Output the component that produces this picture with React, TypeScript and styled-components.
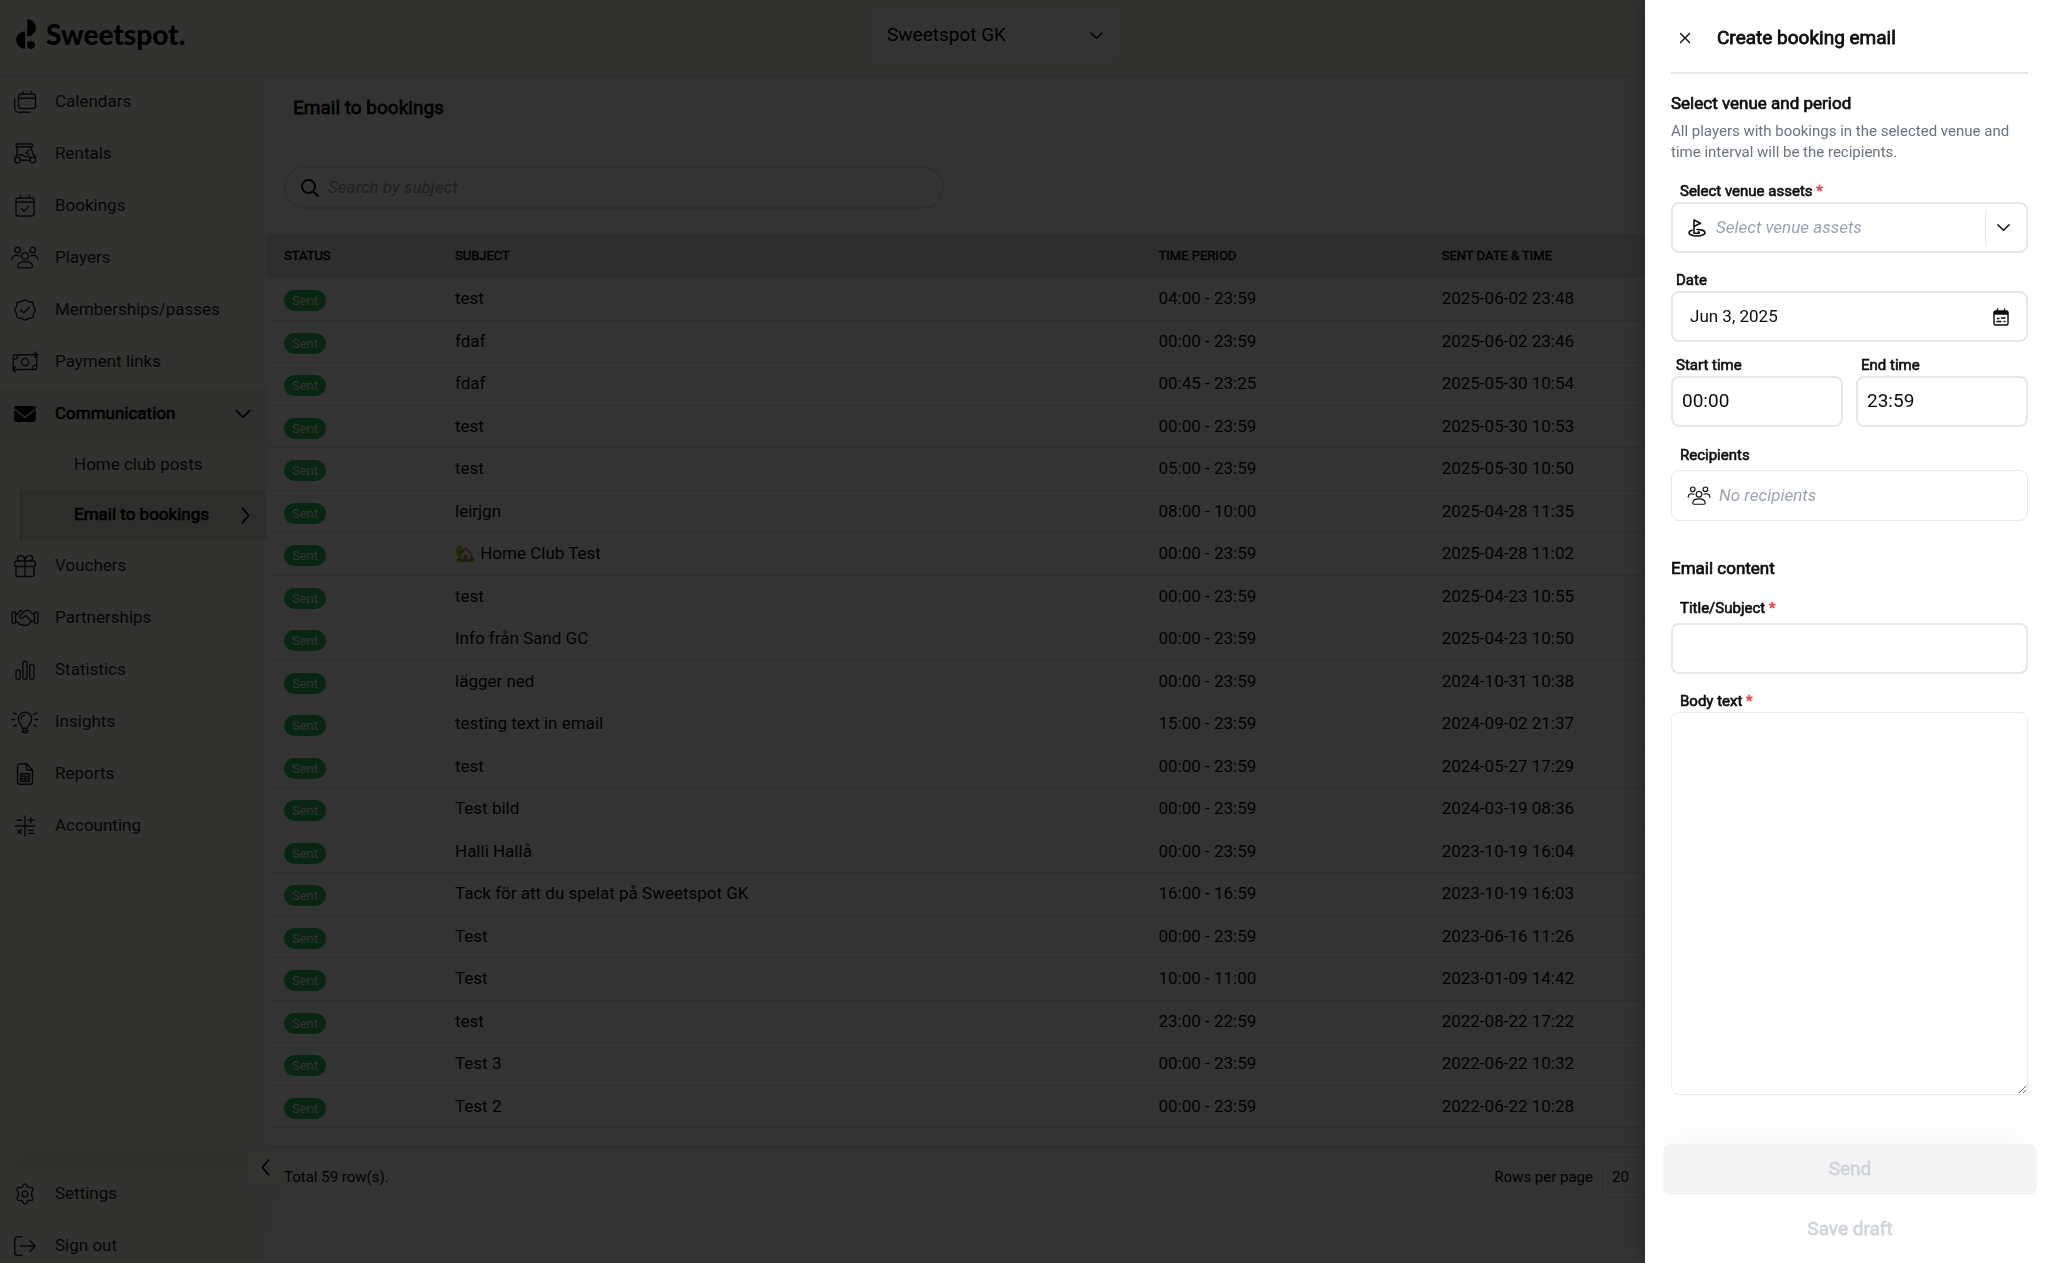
import React, { useState } from 'react';
import styled, { createGlobalStyle, css } from 'styled-components';

const GlobalStyle = createGlobalStyle`
  *, *::before, *::after { box-sizing: border-box; }
  body {
    margin: 0;
    font-family: Roboto, "Liberation Sans", sans-serif;
    font-size: 17px;
    line-height: 1.5;
    color: #0c0c0c;
    background: #fff;
  }
  button, input, select, textarea { font: inherit; color: inherit; margin: 0; }
  button { border: 0; padding: 0; background: none; cursor: pointer; }
  a { color: inherit; text-decoration: none; }
  h1, h2, h3, p, ul { margin: 0; padding: 0; }
  ul { list-style: none; }
`;

const strong = css`
  font-weight: 400;
  -webkit-text-stroke: 0.04em currentColor;
`;

/* ---------- icons ---------- */

const Glyph = styled.svg<{ $weight?: number }>`
  display: block;
  flex: none;
  fill: none;
  stroke: currentColor;
  stroke-width: ${(p) => p.$weight ?? 1.4};
  stroke-linecap: round;
  stroke-linejoin: round;
`;

const NavGlyph = ({ children }: { children: React.ReactNode }) => (
  <Glyph width="28" height="24" viewBox="0 0 28 24" aria-hidden="true">{children}</Glyph>
);

const PeoplePaths = () => (
  <>
    <circle cx="6.5" cy="4" r="2.8" />
    <circle cx="21.7" cy="4" r="2.8" />
    <circle cx="14" cy="10" r="3.4" />
    <path d="M1 13.6c0-2.7 2.2-4.3 4.5-4.3 1 0 1.8.2 2.5.6M27 13.6c0-2.7-2.2-4.3-4.5-4.3-1 0-1.800.2-2.500.6" />
    <path d="M6.6 20.5c0-3 3-5 7.400-5s7.400 2 7.400 5c0 .9-.5 1.400-1.400 1.400H8c-.9 0-1.400-.5-1.400-1.400z" />
  </>
);

const glyphs = {
  calendars: (
    <>
      <rect x="7.5" y="4" width="17" height="14.5" rx="2.5" />
      <path d="M7.5 8.3h17M12 1.5V4M20.2 1.5V4M3.7 9v9.2a4 4 0 0 0 4 4H19" />
    </>
  ),
  cart: (
    <>
      <rect x="5" y="2" width="17" height="2.8" rx="1.2" />
      <path d="M6 4.800V12M19.500 4.800l3 8M18.500 7.500l-3.500 3.500 3.200 2M4.500 15c.5-2 3-2.700 5.500-2.200 2.500.6 3 2.200 8 2.200h1M9.500 18.300h9" />
      <circle cx="6.500" cy="18" r="2.900" />
      <circle cx="21.800" cy="18" r="2.900" />
      <path d="M22 12.500c1.600.4 2.500 1.500 2.500 3" />
    </>
  ),
  booking: (
    <>
      <rect x="5" y="4" width="18" height="18" rx="2.500" />
      <path d="M5 8h18M9.500 1.500V4M18.500 1.500V4M10.500 14.500l2.500 2.700 5-5" />
    </>
  ),
  people: <PeoplePaths />,
  badge: (
    <>
      <path d="M14 2c1.700 0 2.300 1.200 3.700 1.600 1.400.4 2.700-.1 3.800 1s.600 2.400 1 3.800S24.300 10.300 24.300 12s-1.400 2.200-1.800 3.600.1 2.700-1 3.800-2.400.6-3.800 1S15.700 22 14 22s-2.300-1.200-3.700-1.600-2.700.1-3.800-1-.6-2.400-1-3.800S3.700 13.700 3.700 12s1.400-2.200 1.800-3.600-.1-2.700 1-3.800 2.400-.6 3.800-1S12.300 2 14 2z" />
      <path d="M9.800 12l3 3 5.500-5.500" />
    </>
  ),
  payment: (
    <>
      <path d="M2.300 18V6.500A1.700 1.700 0 0 1 4 4.800h22M23.500 2l2.900 2.800-2.900 2.800M25.700 6.800v11a1.700 1.700 0 0 1-1.700 1.700H2M4.500 16.700l-2.900 2.800 2.900 2.800" />
      <circle cx="14" cy="12" r="3.600" />
      <path d="M2.500 9.500c2.700 0 4.300-1.700 4.300-4.500M25.500 15c-2.700 0-4.300 1.700-4.300 4.500" />
    </>
  ),
  mail: (
    <g stroke="none" fill="currentColor">
      <path d="M5.500 4h17A2.300 2.300 0 0 1 24.800 6.200L14 14.500 3.200 6.200A2.300 2.300 0 0 1 5.500 4z" />
      <path d="M3.200 7.800L14 16.200 24.800 7.800v10a2.300 2.300 0 0 1-2.300 2.300h-17a2.300 2.300 0 0 1-2.300-2.300z" />
    </g>
  ),
  gift: (
    <>
      <rect x="3.700" y="7" width="20.600" height="5.500" rx="1.600" />
      <path d="M5 12.500v8a2 2 0 0 0 2 2h14a2 2 0 0 0 2-2v-8M14 7v15.500" />
      <path d="M14 7C14 3.500 12 1.500 9.500 1.500 7.500 1.500 6.500 3 6.500 4.300 6.500 6 8 7 9 7M14 7c0-3.500 2-5.500 4.500-5.500 2 0 3 1.500 3 2.800C21.500 6 20 7 19 7" />
    </>
  ),
  handshake: (
    <>
      <rect x="1" y="6" width="3.600" height="11.500" rx="1.400" />
      <rect x="23.400" y="6" width="3.600" height="11.500" rx="1.400" />
      <path d="M4.600 8.500c1.700 0 2.200-.5 3.200-1.700M4.600 15.300c2.400 0 2.700 1.600 4.400 3.200 1.200 1.100 2.400 0 2.400 0s1.200 1.500 2.700.6c1 .8 2.400.2 2.800-.9 1.300.2 2.300-.8 2.100-2 .8-.9 2-1 4.400-.9" />
      <path d="M23.400 8.500c-2.400 0-2.600-2.200-4.600-3.500-2-1.200-4.600-.6-6 .8l-3.500 3.600c-.8.9-.6 2.100.2 2.700.9.6 2 .3 2.700-.3l2.700-2.300 5.300 5.600M8.600 5.300c.7-.6 1.400-.8 2.200-.8" />
    </>
  ),
  chart: (
    <>
      <rect x="5" y="12" width="4.200" height="9.300" rx="1.600" />
      <rect x="11.900" y="3.300" width="4.200" height="18" rx="1.600" />
      <rect x="18.800" y="6.500" width="4.200" height="14.800" rx="1.600" />
    </>
  ),
  bulb: (
    <>
      <path d="M11.500 18.300c0-3-4.200-4.500-4.200-9.300a6.700 6.700 0 0 1 13.400 0c0 4.800-4.200 6.300-4.200 9.300z" />
      <path d="M11.200 20.500h5.600c0 1.500-1.200 2.400-2.800 2.400s-2.800-.9-2.800-2.400zM10.200 9c0-2 1.400-3.700 3.500-3.900" />
      <path d="M1.200 9.500h2.600M24.200 9.500h2.600M2.500 2.800l2.700 1.500M25.500 2.800l-2.700 1.500M2.500 16.500l2.700-1.700M25.500 16.500l-2.700-1.700" />
    </>
  ),
  report: (
    <>
      <path d="M15.500 1.800H9a2.500 2.500 0 0 0-2.500 2.500v15.400A2.500 2.500 0 0 0 9 22.200h10a2.500 2.500 0 0 0 2.500-2.500V8z" />
      <path d="M15.500 1.800V6.500A1.500 1.500 0 0 0 17 8h4.500" />
      <path d="M9.600 11.800h8.800v7.400H9.600zM9.600 14.300h8.800M9.600 16.800h8.800M14 14.300v4.900" />
    </>
  ),
  calc: (
    <>
      <path d="M4 12h20M14 2v20" />
      <path d="M6 6.300h4.600M17.300 6.300h5.200M19.900 3.700v5.200M6.300 15.800l4 4M10.300 15.800l-4 4M17.300 16.400h5.200M17.300 19.400h5.200" />
    </>
  ),
  gear: (
    <>
      <circle cx="14" cy="12" r="2.900" />
      <path d="M12.100 3.500c.5-2.100 3.300-2.100 3.800 0 .4 1.700 2 2.500 3.600 2 2-.6 3.500 1.700 2 3.300-1.300 1.300-1.300 5.100 0 6.400 1.500 1.600 0 3.900-2 3.300-1.600-.5-3.200.3-3.600 2-.5 2.100-3.300 2.100-3.800 0-.4-1.700-2-2.500-3.600-2-2 .6-3.500-1.700-2-3.300 1.300-1.300 1.300-5.100 0-6.400-1.500-1.600 0-3.900 2-3.300 1.600.5 3.200-.3 3.600-2z" />
    </>
  ),
  signout: <path d="M11 2.700H6.300a2.500 2.500 0 0 0-2.500 2.500v13.600a2.500 2.500 0 0 0 2.500 2.500H11M9.500 12h14.800M18.800 6.500l5.500 5.500-5.500 5.500" />,
};

type GlyphName = keyof typeof glyphs;

const Chevron = ({ dir, size }: { dir: 'down' | 'left' | 'right'; size: number }) => {
  const d = { down: 'M2 5l6 6 6-6', left: 'M11 1L5 8l6 7', right: 'M5 1l6 7-6 7' }[dir];
  return (
    <Glyph $weight={1.6} width={size} height={size} viewBox="0 0 16 16" aria-hidden="true">
      <path d={d} />
    </Glyph>
  );
};

/* ---------- page frame ---------- */

const Page = styled.div`
  display: flex;
  flex-direction: column;
  height: 100vh;
  overflow: hidden;
`;

const TopBar = styled.header`
  display: grid;
  grid-template-columns: 1fr 250px 1fr;
  align-items: start;
  flex: none;
  height: 76px;
  padding: 10px 74px 0 16px;
  background: #fafaf5;
  border-bottom: 1px solid #dfe1e8;
`;

const Brand = styled.a`
  display: flex;
  align-items: center;
  gap: 10px;
  height: 48px;
  font: 900 28px/1 Lato, "Open Sans", sans-serif;
  color: #000;
`;

const BrandMark = styled.svg`
  display: block;
  fill: currentColor;
`;

const selectReset = css`
  appearance: none;
  background: transparent;
  border: 0;
  outline: 0;
  width: 100%;
  height: 100%;
`;

const VenueSwitch = styled.div`
  display: flex;
  align-items: center;
  height: 51px;
  padding: 0 15px 0 16px;
  background: #fff;
  border: 1px solid #f2f2ee;
  border-radius: 8px;
`;

const VenueSelect = styled.select`
  ${selectReset}
  font-size: 19px;
  color: #000;
`;

const Frame = styled.div`
  display: flex;
  flex: 1;
  min-height: 0;
`;

/* ---------- sidebar ---------- */

const Sidebar = styled.nav`
  position: relative;
  display: flex;
  flex-direction: column;
  flex: none;
  width: 267px;
  background: #fafaf5;
  color: #262626;
`;

const NavList = styled.ul`
  flex: 1;
  min-height: 0;
`;

const NavLink = styled.a<{ $open?: boolean }>`
  display: flex;
  align-items: center;
  gap: 16px;
  height: 52px;
  padding: 0 15px 0 11px;
  span { flex: 1; }
  ${(p) => p.$open && css`
    background: #f0f0ea;
    color: #000;
    span { ${strong} }
  `}
`;

const SubList = styled.ul`
  padding-left: 20px;
`;

const SubLink = styled.a<{ $active?: boolean }>`
  display: flex;
  align-items: center;
  justify-content: space-between;
  height: 50px;
  padding: 0 13px 0 53px;
  border-left: 1px solid #e6e6e0;
  background: #f6f6f0;
  ${(p) => p.$active && css`
    background: #e2e2dc;
    border-left-color: #aaa;
    color: #000;
    span { ${strong} }
  `}
`;

const NavFooter = styled.ul`
  flex: none;
  height: 95px;
  box-shadow: 0 -20px 40px -10px rgba(60, 40, 20, 0.12);
`;

const CollapseButton = styled.button`
  position: absolute;
  right: -16px;
  bottom: 78px;
  display: grid;
  place-items: center;
  width: 36px;
  height: 35px;
  border: 1px solid #f0f0ec;
  border-radius: 8px;
  background: #fcfcfa;
  color: #000;
`;

/* ---------- main ---------- */

const Main = styled.main`
  display: flex;
  flex-direction: column;
  flex: 1;
  min-width: 0;
`;

const TitleBar = styled.div`
  display: flex;
  align-items: center;
  height: 66px;
  padding: 0 26px;
  border-bottom: 1px solid #f0f0f0;
`;

const PageTitle = styled.h1`
  ${strong}
  font-size: 19px;
`;

const Toolbar = styled.div`
  padding: 24px 17px 25px;
`;

const SearchBox = styled.label`
  display: flex;
  align-items: center;
  gap: 8px;
  max-width: 660px;
  height: 43px;
  padding: 0 14px;
  border: 2px solid #e6e6ea;
  border-radius: 22px;
`;

const SearchInput = styled.input`
  flex: 1;
  min-width: 0;
  border: 0;
  outline: 0;
  padding: 0;
  background: transparent;
  &::placeholder { color: #9ca3af; font-style: italic; opacity: 1; }
`;

const Table = styled.table`
  width: 100%;
  table-layout: fixed;
  border-collapse: separate;
  border-spacing: 0;
  text-align: left;
`;

const HeadCell = styled.th<{ $width?: string }>`
  ${strong}
  width: ${(p) => p.$width ?? 'auto'};
  height: 44px;
  padding: 0 17px;
  background: #e6e6e6;
  font-size: 13px;
  text-transform: uppercase;
`;

const Cell = styled.td`
  padding: 8px 17px;
  border-bottom: 1px solid #e4e4e8;
  white-space: nowrap;
`;

const Tag = styled.span`
  display: inline-block;
  margin-top: 2px;
  padding: 0 8px;
  border-radius: 11px;
  background: #2fbd5b;
  color: #fff;
  font-size: 13px;
  line-height: 21px;
  vertical-align: middle;
`;

const TableFooter = styled.footer`
  display: flex;
  align-items: center;
  justify-content: space-between;
  margin-top: 18px;
  padding: 9px 366px 9px 17px;
  border-top: 2px solid #e8e8ec;
  font-size: 15px;
`;

const PageSize = styled.label`
  display: flex;
  align-items: center;
  gap: 9px;
`;

const PageSizeSelect = styled.select`
  appearance: none;
  width: 80px;
  height: 41px;
  padding: 0 9px;
  border: 1px solid #e0e0e6;
  border-radius: 8px;
  background: #fff;
`;

/* ---------- booking email panel ---------- */

const Backdrop = styled.div`
  position: fixed;
  inset: 0;
  background: rgba(0, 0, 0, 0.8);
`;

const Panel = styled.form`
  position: fixed;
  inset: 0 0 0 auto;
  display: flex;
  flex-direction: column;
  width: 403px;
  background: #fff;
  box-shadow: 0 0 24px rgba(0, 0, 0, 0.3);
`;

const PanelBody = styled.div`
  display: flex;
  flex-direction: column;
  flex: 1;
  min-height: 0;
  padding: 0 20px 49px 26px;
`;

const PanelHeader = styled.div`
  display: flex;
  align-items: center;
  gap: 22px;
  height: 74px;
  padding: 4px 0 0 4px;
  border-bottom: 2px solid #e5e7eb;
`;

const CloseButton = styled.button`
  display: grid;
  place-items: center;
  width: 20px;
  height: 28px;
`;

const PanelTitle = styled.h2`
  ${strong}
  font-size: 19px;
`;

const SectionTitle = styled.h3<{ $top: number }>`
  ${strong}
  margin-top: ${(p) => p.$top}px;
  font-size: 17px;
  line-height: 26px;
`;

const Hint = styled.p`
  margin-top: 5px;
  color: #6b7280;
  font-size: 15px;
  line-height: 21px;
`;

const Field = styled.div<{ $top: number; $gap?: number; $grow?: boolean }>`
  display: flex;
  flex-direction: column;
  gap: ${(p) => p.$gap ?? 0}px;
  margin-top: ${(p) => p.$top}px;
  min-width: 0;
  flex: ${(p) => (p.$grow ? 1 : 'none')};
`;

const Label = styled.label<{ $inset?: number }>`
  ${strong}
  padding-left: ${(p) => p.$inset ?? 9}px;
  font-size: 15px;
  line-height: 22px;
`;

const Required = styled.span`
  color: #ef4444;
`;

const Box = styled.div<{ $light?: boolean; $pad?: number; $gap?: number }>`
  display: flex;
  align-items: center;
  gap: ${(p) => p.$gap ?? 0}px;
  height: 51px;
  padding: 0 ${(p) => p.$pad ?? 15}px;
  border: ${(p) => (p.$light ? '1px solid #e8e8ec' : '2px solid #e5e7eb')};
  border-radius: 8px;
`;

const BoxInput = styled.input<{ $size?: number }>`
  flex: 1;
  min-width: 0;
  width: 100%;
  padding: 0;
  border: 0;
  outline: 0;
  background: transparent;
  font-size: ${(p) => p.$size ?? 17}px;
  &::placeholder { color: #9ca3af; font-style: italic; opacity: 1; }
`;

const AssetSelect = styled.select`
  ${selectReset}
  flex: 1;
  color: #9ca3af;
  font-style: italic;
`;

const Divider = styled.span`
  width: 1px;
  height: 34px;
  background: #e5e7eb;
`;

const TimeRow = styled.div`
  display: grid;
  grid-template-columns: 1fr 1fr;
  gap: 13px;
`;

const TextArea = styled.textarea`
  flex: 1;
  width: 100%;
  padding: 12px;
  border: 1px solid #ececf0;
  border-radius: 8px;
  outline: 0;
  resize: vertical;
`;

const PanelFooter = styled.div`
  display: flex;
  flex-direction: column;
  gap: 9px;
  padding: 0 11px 8px 18px;
  box-shadow: 0 -20px 40px -20px rgba(0, 0, 0, 0.05);
`;

const ActionButton = styled.button<{ $filled?: boolean }>`
  ${strong}
  height: 51px;
  border-radius: 8px;
  background: ${(p) => (p.$filled ? '#f4f4f4' : 'transparent')};
  color: #d1d5db;
  font-size: 19px;
`;

/* ---------- data ---------- */

const navItems: { icon: GlyphName; label: string }[] = [
  { icon: 'calendars', label: 'Calendars' },
  { icon: 'cart', label: 'Rentals' },
  { icon: 'booking', label: 'Bookings' },
  { icon: 'people', label: 'Players' },
  { icon: 'badge', label: 'Memberships/passes' },
  { icon: 'payment', label: 'Payment links' },
  { icon: 'mail', label: 'Communication' },
  { icon: 'gift', label: 'Vouchers' },
  { icon: 'handshake', label: 'Partnerships' },
  { icon: 'chart', label: 'Statistics' },
  { icon: 'bulb', label: 'Insights' },
  { icon: 'report', label: 'Reports' },
  { icon: 'calc', label: 'Accounting' },
];

const footerItems: { icon: GlyphName; label: string }[] = [
  { icon: 'gear', label: 'Settings' },
  { icon: 'signout', label: 'Sign out' },
];

const emails: [string, string, string][] = [
  ['test', '04:00 - 23:59', '2025-06-02 23:48'],
  ['fdaf', '00:00 - 23:59', '2025-06-02 23:46'],
  ['fdaf', '00:45 - 23:25', '2025-05-30 10:54'],
  ['test', '00:00 - 23:59', '2025-05-30 10:53'],
  ['test', '05:00 - 23:59', '2025-05-30 10:50'],
  ['leirjgn', '08:00 - 10:00', '2025-04-28 11:35'],
  ['🏡 Home Club Test', '00:00 - 23:59', '2025-04-28 11:02'],
  ['test', '00:00 - 23:59', '2025-04-23 10:55'],
  ['Info från Sand GC', '00:00 - 23:59', '2025-04-23 10:50'],
  ['lägger ned', '00:00 - 23:59', '2024-10-31 10:38'],
  ['testing text in email', '15:00 - 23:59', '2024-09-02 21:37'],
  ['test', '00:00 - 23:59', '2024-05-27 17:29'],
  ['Test bild', '00:00 - 23:59', '2024-03-19 08:36'],
  ['Halli Hallå', '00:00 - 23:59', '2023-10-19 16:04'],
  ['Tack för att du spelat på Sweetspot GK', '16:00 - 16:59', '2023-10-19 16:03'],
  ['Test', '00:00 - 23:59', '2023-06-16 11:26'],
  ['Test', '10:00 - 11:00', '2023-01-09 14:42'],
  ['test', '23:00 - 22:59', '2022-08-22 17:22'],
  ['Test 3', '00:00 - 23:59', '2022-06-22 10:32'],
  ['Test 2', '00:00 - 23:59', '2022-06-22 10:28'],
];

/* ---------- parts ---------- */

const SideNav = () => (
  <Sidebar>
    <NavList>
      {navItems.map(({ icon, label }) => {
        const open = label === 'Communication';
        return (
          <li key={label}>
            <NavLink href="#" $open={open}>
              <NavGlyph>{glyphs[icon]}</NavGlyph>
              <span>{label}</span>
              {open && <Chevron dir="down" size={18} />}
            </NavLink>
            {open && (
              <SubList>
                <li><SubLink href="#"><span>Home club posts</span></SubLink></li>
                <li>
                  <SubLink href="#" $active>
                    <span>Email to bookings</span>
                    <Chevron dir="right" size={17} />
                  </SubLink>
                </li>
              </SubList>
            )}
          </li>
        );
      })}
    </NavList>
    <NavFooter>
      {footerItems.map(({ icon, label }) => (
        <li key={label}>
          <NavLink href="#">
            <NavGlyph>{glyphs[icon]}</NavGlyph>
            <span>{label}</span>
          </NavLink>
        </li>
      ))}
    </NavFooter>
    <CollapseButton type="button"><Chevron dir="left" size={17} /></CollapseButton>
  </Sidebar>
);

const EmailTable = () => (
  <Table>
    <thead>
      <tr>
        <HeadCell $width="171px">Status</HeadCell>
        <HeadCell $width="39.5%">Subject</HeadCell>
        <HeadCell $width="15.9%">Time period</HeadCell>
        <HeadCell>Sent date &amp; time</HeadCell>
      </tr>
    </thead>
    <tbody>
      {emails.map(([subject, period, sent]) => (
        <tr key={sent}>
          <Cell><Tag>Sent</Tag></Cell>
          <Cell>{subject}</Cell>
          <Cell>{period}</Cell>
          <Cell>{sent}</Cell>
        </tr>
      ))}
    </tbody>
  </Table>
);

const BookingEmailPanel = () => {
  const [date, setDate] = useState('Jun 3, 2025');
  const [start, setStart] = useState('00:00');
  const [end, setEnd] = useState('23:59');
  return (
    <Panel>
      <PanelBody>
        <PanelHeader>
          <CloseButton type="button">
            <Glyph width="12" height="12" viewBox="0 0 12 12" aria-hidden="true"><path d="M1.500 1.500l9 9M10.500 1.500l-9 9" /></Glyph>
          </CloseButton>
          <PanelTitle>Create booking email</PanelTitle>
        </PanelHeader>

        <SectionTitle $top={16}>Select venue and period</SectionTitle>
        <Hint>All players with bookings in the selected venue and time interval will be the recipients.</Hint>

        <Field $top={17}>
          <Label htmlFor="assets">Select venue assets <Required>*</Required></Label>
          <Box $gap={10}>
            <Glyph $weight={1.6} width="18" height="20" viewBox="0 0 18 20" aria-hidden="true">
              <path d="M6 14.500V2l6.500 3.200L6 8.500" />
              <path d="M4 12.200c-1.800.5-3 1.400-3 2.500C1 16.500 4.500 18 9 18s8-1.500 8-3.300S13.500 11.500 9 11.500M6 15.300h4.500c1.200 0 1.200-1.600 0-1.600" />
            </Glyph>
            <AssetSelect id="assets" defaultValue="">
              <option value="">Select venue assets</option>
            </AssetSelect>
            <Divider />
            <Chevron dir="down" size={15} />
          </Box>
        </Field>

        <Field $top={16}>
          <Label htmlFor="date" $inset={5}>Date</Label>
          <Box $pad={17}>
            <BoxInput id="date" value={date} onChange={(e) => setDate(e.target.value)} />
            <Glyph width="16" height="18" viewBox="0 0 16 18" aria-hidden="true">
              <path fill="currentColor" d="M1 6V4.500A1.500 1.500 0 0 1 2.500 3h11A1.500 1.500 0 0 1 15 4.500V6z" />
              <path d="M1 6v9.500A1.500 1.500 0 0 0 2.500 17h11a1.500 1.500 0 0 0 1.500-1.500V6M4.500 1v2M11.500 1v2" />
              <path d="M4.500 10.500h1.500M8.500 10h3.500M4 13.500h4M11 13.500h1" />
            </Glyph>
          </Box>
        </Field>

        <TimeRow>
          <Field $top={12}>
            <Label htmlFor="start" $inset={5}>Start time</Label>
            <Box $pad={9}><BoxInput id="start" $size={19} value={start} onChange={(e) => setStart(e.target.value)} /></Box>
          </Field>
          <Field $top={12}>
            <Label htmlFor="end" $inset={5}>End time</Label>
            <Box $pad={9}><BoxInput id="end" $size={19} value={end} onChange={(e) => setEnd(e.target.value)} /></Box>
          </Field>
        </TimeRow>

        <Field $top={17} $gap={4}>
          <Label htmlFor="recipients">Recipients</Label>
          <Box $light $gap={8}>
            <Glyph width="24" height="20" viewBox="0 0 28 24" aria-hidden="true"><PeoplePaths /></Glyph>
            <BoxInput id="recipients" placeholder="No recipients" readOnly />
          </Box>
        </Field>

        <SectionTitle $top={34}>Email content</SectionTitle>

        <Field $top={16} $gap={4}>
          <Label htmlFor="subject">Title/Subject <Required>*</Required></Label>
          <Box><BoxInput id="subject" /></Box>
        </Field>

        <Field $top={16} $grow>
          <Label htmlFor="body">Body text <Required>*</Required></Label>
          <TextArea id="body" />
        </Field>
      </PanelBody>
      <PanelFooter>
        <ActionButton type="submit" $filled disabled>Send</ActionButton>
        <ActionButton type="button" disabled>Save draft</ActionButton>
      </PanelFooter>
    </Panel>
  );
};

export default function App() {
  return (
    <>
      <GlobalStyle />
      <Page>
        <TopBar>
          <Brand href="#">
            <BrandMark width="20" height="30" viewBox="0 0 20 30" aria-hidden="true">
              <path d="M11.300 0a8.700 8.700 0 0 1 0 17.400zM9 12.200v17.600a8.800 8.800 0 0 1 0-17.600z" />
              <circle cx="15" cy="25.800" r="3.900" />
            </BrandMark>
            Sweetspot.
          </Brand>
          <VenueSwitch>
            <VenueSelect aria-label="Venue"><option>Sweetspot GK</option></VenueSelect>
            <Chevron dir="down" size={15} />
          </VenueSwitch>
        </TopBar>
        <Frame>
          <SideNav />
          <Main>
            <TitleBar><PageTitle>Email to bookings</PageTitle></TitleBar>
            <Toolbar>
              <SearchBox>
                <Glyph $weight={2} width="20" height="20" viewBox="0 0 20 20" aria-hidden="true">
                  <circle cx="8.500" cy="8.500" r="6.500" />
                  <path d="M13.300 13.300L18 18" />
                </Glyph>
                <SearchInput aria-label="Search" placeholder="Search by subject" />
              </SearchBox>
            </Toolbar>
            <EmailTable />
            <TableFooter>
              <span>Total 59 row(s).</span>
              <PageSize>
                Rows per page
                <PageSizeSelect><option>20</option></PageSizeSelect>
              </PageSize>
            </TableFooter>
          </Main>
        </Frame>
      </Page>
      <Backdrop />
      <BookingEmailPanel />
    </>
  );
}
